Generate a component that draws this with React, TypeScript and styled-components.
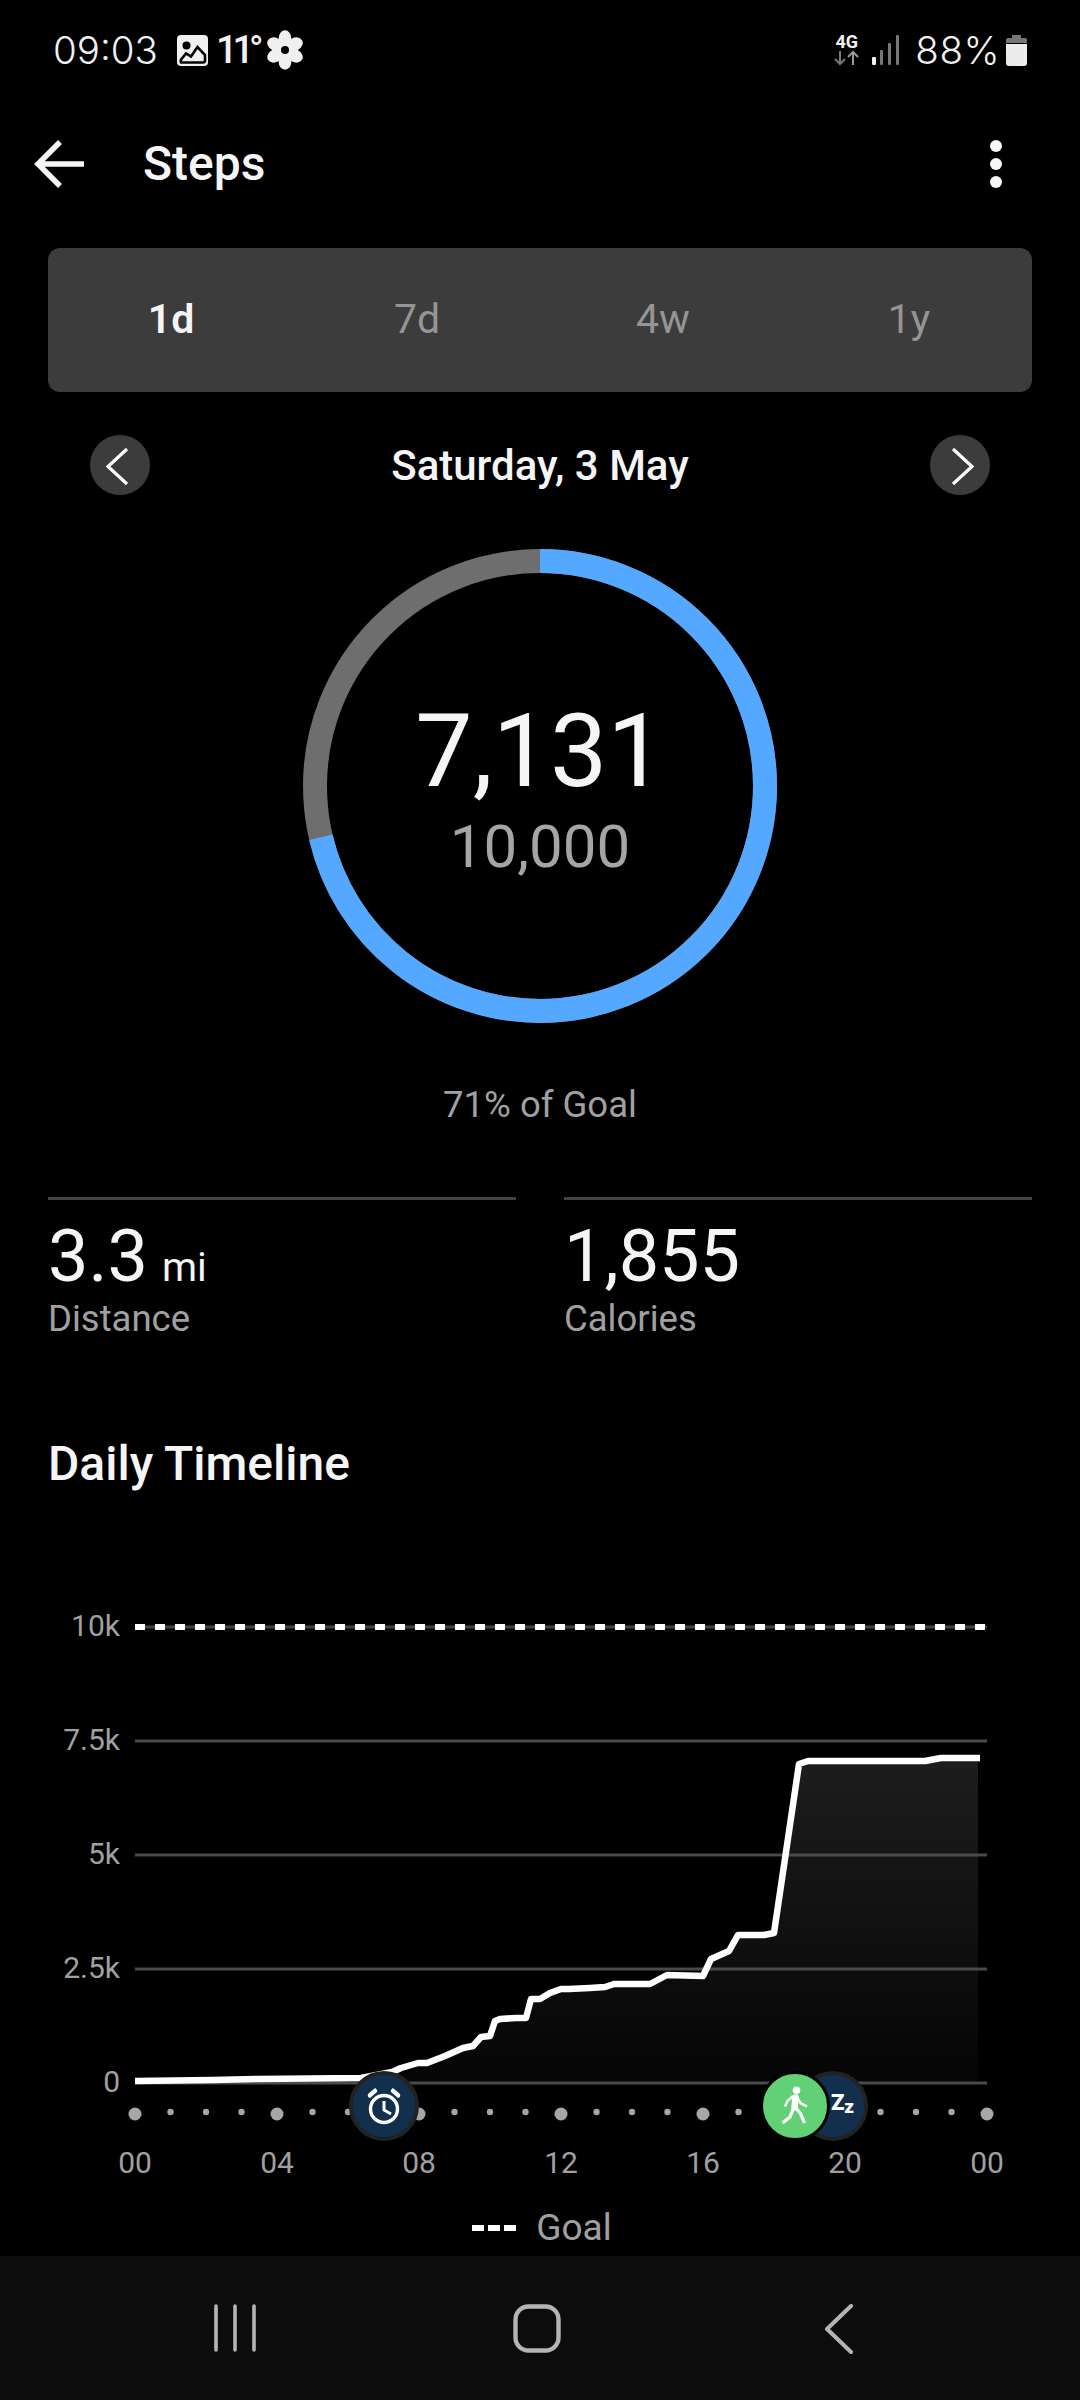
import React from "react";
import styled, { createGlobalStyle } from "styled-components";

const GlobalStyle = createGlobalStyle`
    html, body {
        margin: 0;
        padding: 0;
        background: #000;
    }

    body {
        font-family: "Roboto", "Liberation Sans", sans-serif;
    }
`;

const Page = styled.div`
    display: flex;
    flex-direction: column;
    width: 1080px;
    height: 2400px;
    overflow: hidden;
    background: #000;
    color: #f5f5f5;
`;

const StatusBar = styled.div`
    display: flex;
    align-items: center;
    justify-content: space-between;
    box-sizing: border-box;
    height: 100px;
    padding: 0 53px;
`;

const StatusGroup = styled.div`
    display: flex;
    align-items: center;
`;

const StatusText = styled.span`
    font-family: "Inter", "Roboto", sans-serif;
    font-size: 38.5px;
    font-weight: 300;
    line-height: 44px;
    color: #f0f0f0;
`;

const Temperature = styled.span`
    margin: 0 7px 0 8px;
    font-size: 38px;
    font-weight: 500;
    line-height: 44px;
    letter-spacing: -5px;
    color: #f0f0f0;
`;

const StatusIcon = styled.svg<{ $gap?: number }>`
    display: block;
    flex: none;
    margin-left: ${(p) => p.$gap ?? 0}px;
`;

const NetworkStack = styled.div`
    display: flex;
    flex-direction: column;
    align-items: center;
    width: 27px;
`;

const NetworkLabel = styled.span`
    font-size: 18px;
    font-weight: 700;
    line-height: 16px;
    color: #f0f0f0;
`;

const BatteryLevel = styled(StatusText)`
    margin-left: 15px;
    letter-spacing: 0.5px;
`;

const Header = styled.div`
    display: flex;
    align-items: center;
    justify-content: space-between;
    box-sizing: border-box;
    height: 128px;
    padding: 0 78px 0 34px;
`;

const HeaderLeft = styled.div`
    display: flex;
    align-items: center;
    gap: 57px;
`;

const BackArrow = styled.svg`
    display: block;
`;

const Title = styled.h1`
    margin: 0;
    font-size: 48px;
    font-weight: 500;
    line-height: 60px;
    color: #f5f5f5;
`;

const Kebab = styled.div`
    display: flex;
    flex-direction: column;
    gap: 6px;
`;

const KebabDot = styled.span`
    width: 12px;
    height: 12px;
    border-radius: 50%;
    background: #f5f5f5;
`;

const Tabs = styled.div`
    display: grid;
    grid-template-columns: repeat(4, 1fr);
    height: 144px;
    margin: 20px 48px 0;
    border-radius: 12px;
    background: #3c3c3c;
`;

const Tab = styled.div<{ $active?: boolean }>`
    display: flex;
    align-items: center;
    justify-content: center;
    padding-bottom: 2px;
    font-size: 41px;
    font-weight: ${(p) => (p.$active ? 600 : 400)};
    color: ${(p) => (p.$active ? "#f5f5f5" : "#959595")};
`;

const DateRow = styled.div`
    display: flex;
    align-items: center;
    justify-content: space-between;
    height: 60px;
    margin: 43px 90px 0;
`;

const DateLabel = styled.div`
    font-size: 42px;
    font-weight: 500;
    color: #f5f5f5;
`;

const RoundButton = styled.div`
    display: flex;
    align-items: center;
    justify-content: center;
    width: 60px;
    height: 60px;
    border-radius: 50%;
    background: #3c3c3c;
`;

const Ring = styled.div`
    display: grid;
    width: 474px;
    height: 474px;
    margin: 54px auto 0;

    & > * {
        grid-area: 1 / 1;
    }
`;

const RingText = styled.div`
    display: flex;
    flex-direction: column;
    align-items: center;
    padding-top: 147px;
`;

const StepCount = styled.div`
    font-size: 102px;
    line-height: 110px;
    color: #f5f5f5;
`;

const StepGoal = styled.div`
    margin-top: 7px;
    font-size: 60px;
    line-height: 68px;
    color: #a5a5a5;
`;

const GoalNote = styled.div`
    margin-top: 62px;
    font-size: 36.5px;
    line-height: 40px;
    text-align: center;
    color: #a0a0a0;
`;

const Stats = styled.div`
    display: grid;
    grid-template-columns: 1fr 1fr;
    gap: 48px;
    margin: 72px 48px 0;
`;

const Stat = styled.div`
    padding-top: 17px;
    border-top: 3px solid #444;
`;

const StatValue = styled.div`
    font-size: 72px;
    line-height: 80px;
    color: #f5f5f5;
`;

const StatUnit = styled.span`
    margin-left: 14px;
    font-size: 40px;
    line-height: 1;
`;

const StatLabel = styled.div`
    font-size: 36.5px;
    line-height: 44px;
    color: #a0a0a0;
`;

const SectionTitle = styled.h2`
    margin: 93px 48px 0;
    font-size: 48px;
    font-weight: 500;
    line-height: 60px;
    color: #f5f5f5;
`;

const Main = styled.div`
    flex: 1;
    padding-top: 1px;
`;

const ChartWrap = styled.div`
    position: relative;
    width: 1080px;
    height: 696px;
`;

const ChartSvg = styled.svg`
    display: block;
`;

const AxisText = styled.text`
    font-family: "Roboto", sans-serif;
    font-size: 30px;
    fill: #a0a0a0;
`;

const Marker = styled.div<{ $left: number; $color: string; $ring: string; $border: number }>`
    position: absolute;
    top: 576px;
    left: ${(p) => p.$left}px;
    display: flex;
    align-items: center;
    justify-content: center;
    box-sizing: border-box;
    width: 70px;
    height: 70px;
    border: ${(p) => p.$border}px solid ${(p) => p.$ring};
    border-radius: 50%;
    background: ${(p) => p.$color};
`;

const SleepText = styled.span`
    margin: -6px 0 0 19px;
    font-size: 22px;
    font-weight: 900;
    line-height: 24px;
    color: #fff;
    white-space: nowrap;
`;

const SmallZ = styled.span`
    position: relative;
    top: 3px;
    font-size: 19px;
`;

const Legend = styled.div`
    display: flex;
    align-items: center;
    justify-content: center;
    gap: 20px;
    height: 44px;
    margin-top: 15px;
    padding-left: 4px;
`;

const LegendDashes = styled.div`
    display: flex;
    gap: 4px;
`;

const LegendDash = styled.span`
    width: 12px;
    height: 6px;
    background: #fff;
`;

const LegendLabel = styled.span`
    font-size: 37px;
    line-height: 44px;
    color: #a0a0a0;
`;

const NavBar = styled.div`
    display: grid;
    grid-template-columns: 434px 190px 1fr;
    box-sizing: border-box;
    height: 144px;
    padding-top: 48px;
    background: #0c0c0c;
`;

const NavSlot = styled.div<{ $left: number }>`
    padding-left: ${(p) => p.$left}px;
`;

const curvePoints =
    "135,2080 213,2079 258,2078 361,2077 392,2071 401,2067 418,2062 427,2062 445,2055 463,2047 473,2045 481,2036 490,2035 495,2020 500,2018 516,2017 526,2017 531,1998 540,1998 550,1992 561,1988 569,1988 590,1987 605,1986 614,1983 650,1983 667,1974 703,1975 711,1958 729,1950 738,1934 764,1934 774,1932 799,1763 808,1760 925,1760 941,1757";

const gridLines = [
    { y: 1740, label: "7.5k" },
    { y: 1854, label: "5k" },
    { y: 1968, label: "2.5k" },
    { y: 2082, label: "0" },
];

const hours = ["00", "04", "08", "12", "16", "20", "00"];

function Chart() {
    const dots = Array.from({ length: 25 }, (_, i) => i);

    return (
        <ChartWrap>
            <ChartSvg width="1080" height="696" viewBox="0 1494 1080 696">
                <defs>
                    <linearGradient id="stepsFill" x1="0" y1="0" x2="0" y2="1">
                        <stop offset="0" stopColor="#1d1d1d" />
                        <stop offset="1" stopColor="#050505" />
                    </linearGradient>
                </defs>

                <polygon points={`135,2082 ${curvePoints} 978,1757 978,2082`} fill="url(#stepsFill)" />

                <AxisText x="120" y="1635" textAnchor="end">
                    10k
                </AxisText>
                <line x1="135" x2="987" y1="1626" y2="1626" stroke="#444" strokeWidth="3" />
                <line
                    x1="135"
                    x2="985"
                    y1="1626"
                    y2="1626"
                    stroke="#fff"
                    strokeWidth="6"
                    strokeDasharray="10 10"
                />

                {gridLines.map((g) => (
                    <React.Fragment key={g.label}>
                        <AxisText x="120" y={g.y + 9} textAnchor="end">
                            {g.label}
                        </AxisText>
                        <line x1="135" x2="987" y1={g.y} y2={g.y} stroke="#4a4a4a" strokeWidth="3" />
                    </React.Fragment>
                ))}

                <polyline
                    points={`${curvePoints} 980,1757`}
                    fill="none"
                    stroke="#fff"
                    strokeWidth="6.5"
                    strokeLinejoin="round"
                />

                {dots.map((i) =>
                    i % 4 === 0 ? (
                        <circle key={i} cx={135 + i * 35.5} cy="2113" r="6.5" fill="#a6a6a6" />
                    ) : (
                        <circle key={i} cx={135 + i * 35.5} cy="2111" r="3.2" fill="#a6a6a6" />
                    ),
                )}

                {hours.map((h, i) => (
                    <AxisText key={i} x={135 + i * 142} y="2172" textAnchor="middle">
                        {h}
                    </AxisText>
                ))}
            </ChartSvg>

            <Marker $left={349} $color="#12304d" $ring="#222" $border={4}>
                <svg width="40" height="42" viewBox="0 0 40 42">
                    <circle cx="20" cy="24" r="13.5" fill="none" stroke="#fff" strokeWidth="3.4" />
                    <polyline points="20,16 20,25 27,29" fill="none" stroke="#fff" strokeWidth="3" />
                    <path d="M4 9 L11 3 Q14 5 13 7 L6 13 Q3 12 4 9Z" fill="#fff" />
                    <path d="M36 9 L29 3 Q26 5 27 7 L34 13 Q37 12 36 9Z" fill="#fff" />
                </svg>
            </Marker>

            <Marker $left={798} $color="#12304d" $ring="#222" $border={4}>
                <SleepText>
                    Z<SmallZ>z</SmallZ>
                </SleepText>
            </Marker>

            <Marker $left={760} $color="#62d176" $ring="#000" $border={3}>
                <svg width="64" height="64" viewBox="3 3 64 64">
                    <circle cx="36.5" cy="19.3" r="3.8" fill="#fff" />
                    <line x1="35.5" y1="26.5" x2="34.5" y2="36.5" stroke="#fff" strokeWidth="6.4" strokeLinecap="round" />
                    <polyline points="33,25 27.5,30 25,35.5" fill="none" stroke="#fff" strokeWidth="2.4" />
                    <polyline points="37,26 40.5,32 47,35.5" fill="none" stroke="#fff" strokeWidth="2.4" />
                    <polyline points="33.5,37 30,46 22.5,52" fill="none" stroke="#fff" strokeWidth="3.2" />
                    <polyline points="36,37 40.5,42.5 44.5,52" fill="none" stroke="#fff" strokeWidth="3.2" />
                </svg>
            </Marker>
        </ChartWrap>
    );
}

export default function App() {
    return (
        <Page>
            <GlobalStyle />

            <StatusBar>
                <StatusGroup>
                    <StatusText>09:03</StatusText>
                    <StatusIcon width="31" height="31" viewBox="0 0 31 31" $gap={19}>
                        <rect width="31" height="31" rx="4" fill="#f0f0f0" />
                        <circle cx="9.5" cy="10.5" r="4" fill="#000" />
                        <path
                            d="M4 27.5 Q3 25.5 5 23.5 L9 18.5 L14 21.5 L20.5 12 L28 20 V25.5 Q28 27.5 26 27.5Z"
                            fill="#f0f0f0"
                            stroke="#000"
                            strokeWidth="2.6"
                        />
                    </StatusIcon>
                    <Temperature>11°</Temperature>
                    <StatusIcon width="38" height="40" viewBox="-19 -20 38 40">
                        {[0, 60, 120, 180, 240, 300].map((a) => (
                            <ellipse key={a} cx="0" cy="-11.5" rx="6.4" ry="8.2" fill="#f0f0f0" transform={`rotate(${a})`} />
                        ))}
                        <circle r="6.5" fill="#f0f0f0" />
                        <circle r="4" fill="#000" />
                    </StatusIcon>
                </StatusGroup>

                <StatusGroup>
                    <NetworkStack>
                        <NetworkLabel>4G</NetworkLabel>
                        <StatusIcon width="27" height="16" viewBox="0 0 27 16">
                            <path d="M7 1 V14 M2 9 L7 14 L12 9" fill="none" stroke="#777" strokeWidth="2" />
                            <path d="M20 15 V2 M15 7 L20 2 L25 7" fill="none" stroke="#999" strokeWidth="2" />
                        </StatusIcon>
                    </NetworkStack>
                    <StatusIcon width="28" height="30" viewBox="0 0 28 30" $gap={12}>
                        <rect x="0" y="22" width="4" height="8" rx="1" fill="#f0f0f0" />
                        <rect x="8" y="15" width="3" height="15" rx="1" fill="#777" />
                        <rect x="16" y="8" width="3" height="22" rx="1" fill="#777" />
                        <rect x="24" y="0" width="3" height="30" rx="1" fill="#777" />
                    </StatusIcon>
                    <BatteryLevel>88%</BatteryLevel>
                    <StatusIcon width="21" height="31" viewBox="0 0 21 31" $gap={6}>
                        <path d="M6 0 H15 V3 H19 Q21 3 21 5 V8 H0 V5 Q0 3 2 3 H6Z" fill="#777" />
                        <path d="M0 9 H21 V28 Q21 31 18 31 H3 Q0 31 0 28Z" fill="#ececec" />
                    </StatusIcon>
                </StatusGroup>
            </StatusBar>

            <Header>
                <HeaderLeft>
                    <BackArrow width="52" height="50" viewBox="0 0 52 50">
                        <path d="M50 25 H6 M26 3 L4 25 L26 47" fill="none" stroke="#f5f5f5" strokeWidth="5.5" />
                    </BackArrow>
                    <Title>Steps</Title>
                </HeaderLeft>
                <Kebab>
                    <KebabDot />
                    <KebabDot />
                    <KebabDot />
                </Kebab>
            </Header>

            <Tabs>
                <Tab $active>1d</Tab>
                <Tab>7d</Tab>
                <Tab>4w</Tab>
                <Tab>1y</Tab>
            </Tabs>

            <DateRow>
                <RoundButton>
                    <svg width="60" height="60" viewBox="0 0 60 60">
                        <polyline points="37,14 18,31.5 37,49" fill="none" stroke="#fff" strokeWidth="3.2" />
                    </svg>
                </RoundButton>
                <DateLabel>Saturday, 3 May</DateLabel>
                <RoundButton>
                    <svg width="60" height="60" viewBox="0 0 60 60">
                        <polyline points="23,14 42,31.5 23,49" fill="none" stroke="#fff" strokeWidth="3.2" />
                    </svg>
                </RoundButton>
            </DateRow>

            <Ring>
                <svg width="474" height="474" viewBox="0 0 474 474">
                    <circle cx="237" cy="237" r="225" fill="none" stroke="#6e6e6e" strokeWidth="24" />
                    <circle
                        cx="237"
                        cy="237"
                        r="225"
                        fill="none"
                        stroke="#55a8ff"
                        strokeWidth="24"
                        strokeDasharray={`${2 * Math.PI * 225 * 0.7131} ${2 * Math.PI * 225}`}
                        transform="rotate(-90 237 237)"
                    />
                </svg>
                <RingText>
                    <StepCount>7,131</StepCount>
                    <StepGoal>10,000</StepGoal>
                </RingText>
            </Ring>

            <GoalNote>71% of Goal</GoalNote>

            <Stats>
                <Stat>
                    <StatValue>
                        3.3<StatUnit>mi</StatUnit>
                    </StatValue>
                    <StatLabel>Distance</StatLabel>
                </Stat>
                <Stat>
                    <StatValue>1,855</StatValue>
                    <StatLabel>Calories</StatLabel>
                </Stat>
            </Stats>

            <SectionTitle>Daily Timeline</SectionTitle>

            <Main>
                <Chart />
                <Legend>
                    <LegendDashes>
                        <LegendDash />
                        <LegendDash />
                        <LegendDash />
                    </LegendDashes>
                    <LegendLabel>Goal</LegendLabel>
                </Legend>
            </Main>

            <NavBar>
                <NavSlot $left={214}>
                    <svg width="42" height="48" viewBox="0 0 42 48">
                        <path d="M2 2 V46 M21 2 V46 M40 2 V46" stroke="#b4b4b4" strokeWidth="3.6" strokeLinecap="round" />
                    </svg>
                </NavSlot>
                <NavSlot $left={79}>
                    <svg width="48" height="50" viewBox="0 0 48 50">
                        <rect x="2.5" y="2.5" width="43" height="44" rx="13" fill="none" stroke="#b4b4b4" strokeWidth="4.4" />
                    </svg>
                </NavSlot>
                <NavSlot $left={200}>
                    <svg width="30" height="50" viewBox="0 0 30 50">
                        <polyline
                            points="27,2 3,25 27,48"
                            fill="none"
                            stroke="#b4b4b4"
                            strokeWidth="4"
                            strokeLinecap="round"
                            strokeLinejoin="round"
                        />
                    </svg>
                </NavSlot>
            </NavBar>
        </Page>
    );
}
